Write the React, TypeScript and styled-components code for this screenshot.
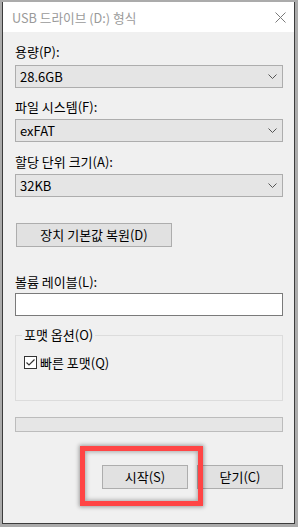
import React from "react";
import styled, { createGlobalStyle } from "styled-components";

const Global = createGlobalStyle`
  html, body { margin: 0; padding: 0; }
  body {
    background: #ababab;
    font-family: "Noto Sans CJK KR", "Noto Sans", sans-serif;
    font-size: 13px;
    color: #000;
  }
  * { box-sizing: border-box; }
`;

const Window = styled.div`
  margin: 2px 3px 3px 2px;
  width: 293px;
  height: 522px;
  border: 1px solid #3c3c3c;
  border-top: none;
  background: #f0f0f0;
  display: flex;
  flex-direction: column;
`;

const TitleBar = styled.div`
  height: 30px;
  background: #fff;
  display: flex;
  align-items: center;
  justify-content: space-between;
  padding: 0 8px 0 9px;
`;

const Title = styled.span`
  color: #9a9a9a;
  font-size: 12.7px;
  line-height: 16px;
  margin-top: 1px;
`;

const Body = styled.div`
  position: relative;
  display: flex;
  flex-direction: column;
  padding: 0 11px 0 12px;
`;

const Label = styled.div<{ $mt: number }>`
  margin-top: ${(p) => p.$mt}px;
  line-height: 16px;
  height: 16px;
  white-space: nowrap;
`;

const Combo = styled.div<{ $mt: number }>`
  margin-top: ${(p) => p.$mt}px;
  height: 23px;
  border: 1px solid #adadad;
  background: #e5e5e5;
  display: flex;
  align-items: center;
  justify-content: space-between;
  padding: 0 5px 0 4px;
  line-height: 16px;
`;

const Button = styled.div<{ $w: number }>`
  width: ${(p) => p.$w}px;
  height: 24px;
  border: 1px solid #adadad;
  background: #e1e1e1;
  display: flex;
  align-items: center;
  justify-content: center;
  line-height: 16px;
  white-space: nowrap;
`;

const ResetRow = styled.div`
  margin-top: 26px;
  display: flex;
  padding-left: 1px;
`;

const TextInput = styled.div`
  margin-top: 3px;
  height: 23px;
  border: 1px solid #7a7a7a;
  background: #fff;
`;

const Group = styled.fieldset`
  margin: 11px 0 0 0;
  border: 1px solid #dcdcdc;
  padding: 13px 6px 31px 6px;
  min-width: 0;
`;

const Legend = styled.legend`
  padding: 0 2px;
  line-height: 16px;
  height: 16px;
`;

const CheckRow = styled.div`
  display: flex;
  align-items: center;
  gap: 3px;
  margin-left: 2px;
  height: 13px;
  line-height: 16px;
`;

const CheckBox = styled.div`
  width: 13px;
  height: 13px;
  border: 1px solid #333;
  background: #fff;
  display: flex;
  align-items: center;
  justify-content: center;
`;

const Progress = styled.div`
  margin-top: 16px;
  height: 15px;
  border: 1px solid #bcbcbc;
  background: #e6e6e6;
`;

const ButtonRow = styled.div`
  margin-top: 33px;
  display: flex;
  justify-content: flex-end;
  gap: 9px;
`;

const Highlight = styled.span`
  position: relative;
  display: flex;
`;

const RedBox = styled.span`
  position: absolute;
  top: -19px;
  left: -22px;
  right: -15px;
  bottom: -17px;
  border: 5px solid #ff4545;
  box-shadow: 0 0 4px 1px rgba(0, 0, 0, 0.35), inset 0 0 4px 1px rgba(0, 0, 0, 0.3);
  pointer-events: none;
`;

const Chevron = () => (
  <svg width="9" height="5" viewBox="0 0 9 5">
    <path d="M0.5 0.5 L4.5 4.5 L8.5 0.5" fill="none" stroke="#555" strokeWidth="1" />
  </svg>
);

const CloseIcon = () => (
  <svg width="11" height="11" viewBox="0 0 11 11">
    <path d="M0.5 0.5 L10.5 10.5 M10.5 0.5 L0.5 10.5" fill="none" stroke="#7a7a7a" strokeWidth="1" />
  </svg>
);

const Check = () => (
  <svg width="11" height="11" viewBox="0 0 11 11">
    <path d="M1.5 5.5 L4 8 L9.5 2.5" fill="none" stroke="#333" strokeWidth="1.2" />
  </svg>
);

export default function App() {
  return (
    <>
      <Global />
      <Window>
        <TitleBar>
          <Title>USB 드라이브 (D:) 형식</Title>
          <CloseIcon />
        </TitleBar>
        <Body>
          <Label $mt={12}>용량(P):</Label>
          <Combo $mt={5}>
            <span>28.6GB</span>
            <Chevron />
          </Combo>
          <Label $mt={11}>파일 시스템(F):</Label>
          <Combo $mt={4}>
            <span>exFAT</span>
            <Chevron />
          </Combo>
          <Label $mt={12}>할당 단위 크기(A):</Label>
          <Combo $mt={4}>
            <span>32KB</span>
            <Chevron />
          </Combo>
          <ResetRow>
            <Button $w={156}>장치 기본값 복원(D)</Button>
          </ResetRow>
          <Label $mt={27}>볼륨 레이블(L):</Label>
          <TextInput />
          <Group>
            <Legend>포맷 옵션(O)</Legend>
            <CheckRow>
              <CheckBox>
                <Check />
              </CheckBox>
              <span>빠른 포맷(Q)</span>
            </CheckRow>
          </Group>
          <Progress />
          <ButtonRow>
            <Highlight>
              <Button $w={86}>시작(S)</Button>
              <RedBox />
            </Highlight>
            <Button $w={86}>닫기(C)</Button>
          </ButtonRow>
        </Body>
      </Window>
    </>
  );
}
